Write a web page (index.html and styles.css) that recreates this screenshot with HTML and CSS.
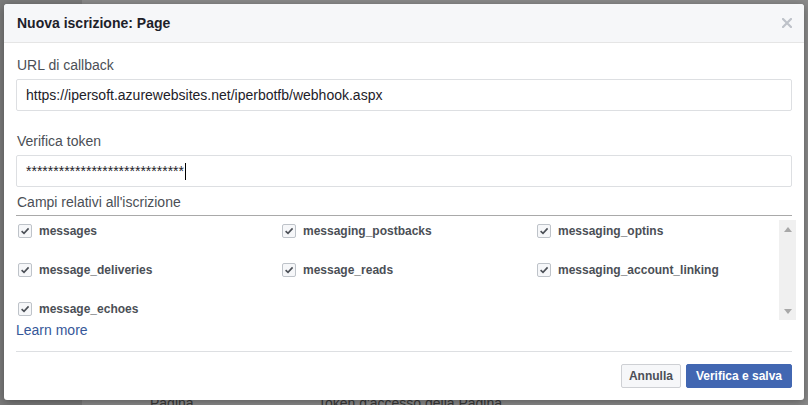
FILE: index.html
```html
<!DOCTYPE html>
<html lang="it">
<head>
<meta charset="utf-8">
<title>Nuova iscrizione: Page</title>
<link rel="stylesheet" href="styles.css">
</head>
<body>
<div class="page">
  <div class="side"></div>
  <div class="main">
    <div class="bg-row">
      <span class="bg-col1">Pagina</span>
      <span class="bg-col2">Token d'accesso della Pagina</span>
    </div>
  </div>
</div>

<div class="dialog">
  <div class="dlg-head">
    <span class="dlg-title">Nuova iscrizione: Page</span>
    <svg class="close" width="10" height="10" viewBox="0 0 10 10"><path d="M1 1L9 9M9 1L1 9" stroke="#bec2c9" stroke-width="2.2" stroke-linecap="square"/></svg>
  </div>
  <div class="dlg-body">
    <div class="field">
      <div class="label">URL di callback</div>
      <div class="input">https://ipersoft.azurewebsites.net/iperbotfb/webhook.aspx</div>
    </div>
    <div class="field field-tight">
      <div class="label">Verifica token</div>
      <div class="input"><span class="stars">*****************************</span><span class="caret"></span></div>
    </div>
    <div class="section-label">Campi relativi all'iscrizione</div>
    <div class="list-wrap">
      <div class="list">
        <div class="item"><span class="cb"><svg width="10" height="10" viewBox="0 0 10 10"><path d="M1.6 5.2L4 7.4L8.6 2.4" fill="none" stroke="#4b4f56" stroke-width="1.6"/></svg></span>messages</div>
        <div class="item"><span class="cb"><svg width="10" height="10" viewBox="0 0 10 10"><path d="M1.6 5.2L4 7.4L8.6 2.4" fill="none" stroke="#4b4f56" stroke-width="1.6"/></svg></span>messaging_postbacks</div>
        <div class="item"><span class="cb"><svg width="10" height="10" viewBox="0 0 10 10"><path d="M1.6 5.2L4 7.4L8.6 2.4" fill="none" stroke="#4b4f56" stroke-width="1.6"/></svg></span>messaging_optins</div>
        <div class="item"><span class="cb"><svg width="10" height="10" viewBox="0 0 10 10"><path d="M1.6 5.2L4 7.4L8.6 2.4" fill="none" stroke="#4b4f56" stroke-width="1.6"/></svg></span>message_deliveries</div>
        <div class="item"><span class="cb"><svg width="10" height="10" viewBox="0 0 10 10"><path d="M1.6 5.2L4 7.4L8.6 2.4" fill="none" stroke="#4b4f56" stroke-width="1.6"/></svg></span>message_reads</div>
        <div class="item"><span class="cb"><svg width="10" height="10" viewBox="0 0 10 10"><path d="M1.6 5.2L4 7.4L8.6 2.4" fill="none" stroke="#4b4f56" stroke-width="1.6"/></svg></span>messaging_account_linking</div>
        <div class="item"><span class="cb"><svg width="10" height="10" viewBox="0 0 10 10"><path d="M1.6 5.2L4 7.4L8.6 2.4" fill="none" stroke="#4b4f56" stroke-width="1.6"/></svg></span>message_echoes</div>
      </div>
      <div class="scrollbar">
        <svg width="8" height="5" viewBox="0 0 8 5"><path d="M0 5L4 0L8 5Z" fill="#a8a8a8"/></svg>
        <svg width="8" height="5" viewBox="0 0 8 5"><path d="M0 0L4 5L8 0Z" fill="#a8a8a8"/></svg>
      </div>
    </div>
    <a class="learn" href="#">Learn more</a>
  </div>
  <div class="dlg-foot">
    <button class="btn btn-cancel">Annulla</button>
    <button class="btn btn-primary">Verifica e salva</button>
  </div>
</div>
</body>
</html>
```

FILE: styles.css
```css
* { box-sizing: border-box; }
html, body { margin: 0; padding: 0; }
body {
  width: 808px;
  height: 405px;
  overflow: hidden;
  background: #8b8b8b;
  font-family: "Liberation Sans", Arial, sans-serif;
  position: relative;
}
.page {
  display: flex;
  height: 405px;
}
.side {
  width: 82px;
  background: #7b7b7b;
}
.main {
  flex: 1;
  display: flex;
  flex-direction: column;
  justify-content: flex-end;
}
.bg-row {
  display: flex;
  font-size: 14px;
  line-height: 18px;
  color: #3a3a3a;
  padding-left: 68px;
  margin-bottom: -7px;
}
.bg-col1 { width: 168px; }

.dialog {
  position: absolute;
  left: 4px;
  top: 4px;
  width: 800px;
  height: 396px;
  background: #fff;
  border-radius: 3px;
  box-shadow: 0 2px 10px rgba(0,0,0,.35);
  display: flex;
  flex-direction: column;
  overflow: hidden;
}
.dlg-head {
  height: 40px;
  background: #f6f7f9;
  border-bottom: 1px solid #e5e5e5;
  display: flex;
  align-items: center;
  justify-content: space-between;
  padding: 0 13px 0 13px;
  border-radius: 3px 3px 0 0;
}
.dlg-title {
  font-size: 14px;
  font-weight: bold;
  color: #1d2129;
}
.close { display: block; margin-right: -1px; }

.dlg-body {
  padding: 13px 12px 11px;
}
.field { margin-bottom: 21px; }
.field-tight { margin-bottom: 6px; }
.label {
  font-size: 14px;
  line-height: 19px;
  color: #4b4f56;
  margin-bottom: 4px;
  padding-left: 1px;
}
.input {
  height: 32px;
  border: 1px solid #dddfe2;
  border-radius: 2px;
  padding: 0 9px;
  font-size: 14px;
  color: #1d2129;
  display: flex;
  align-items: center;
}
.stars {
  font-size: 14px;
  line-height: 14px;
  color: #1d2129;
  margin-right: 1px;
}
.caret {
  display: inline-block;
  width: 1px;
  height: 17px;
  background: #000;
}
.section-label {
  font-size: 14px;
  line-height: 19px;
  color: #4b4f56;
  padding: 0 0 3px 1px;
  border-bottom: 1px solid #a9a9a9;
}
.list-wrap {
  margin-top: 4px;
  margin-right: -4px;
  height: 100px;
  display: flex;
}
.list {
  flex: 1;
  display: grid;
  grid-template-columns: 264px 255px 1fr;
  row-gap: 23px;
  align-content: start;
  padding: 3px 0 0 2px;
}
.item {
  display: flex;
  align-items: center;
  height: 16px;
  font-size: 12px;
  font-weight: bold;
  color: #4b4f56;
}
.cb {
  width: 14px;
  height: 14px;
  border: 1px solid #bec3c9;
  border-radius: 2px;
  background: #f6f7f9;
  display: flex;
  align-items: center;
  justify-content: center;
  margin-right: 7px;
}
.cb svg { display: block; }
.scrollbar {
  width: 17px;
  background: #f0f0f0;
  display: flex;
  flex-direction: column;
  justify-content: space-between;
  align-items: center;
  padding: 7px 0 6px;
}
.scrollbar svg { display: block; }
.learn {
  display: block;
  margin-top: 1px;
  font-size: 14px;
  line-height: 19px;
  color: #365899;
  text-decoration: none;
}

.dlg-foot {
  margin: 0 12px;
  border-top: 1px solid #dddfe2;
  padding: 12px 0;
  display: flex;
  justify-content: flex-end;
  gap: 5px;
}
.btn {
  height: 24px;
  font-family: "Liberation Sans", Arial, sans-serif;
  font-size: 12px;
  font-weight: bold;
  line-height: 22px;
  border-radius: 2px;
  cursor: pointer;
}
.btn-cancel {
  padding: 0 7px;
  background: #f6f7f9;
  border: 1px solid #ced0d4;
  color: #4b4f56;
}
.btn-primary {
  padding: 0 9px;
  background: #4267b2;
  border: 1px solid #4267b2;
  color: #fff;
}
```
